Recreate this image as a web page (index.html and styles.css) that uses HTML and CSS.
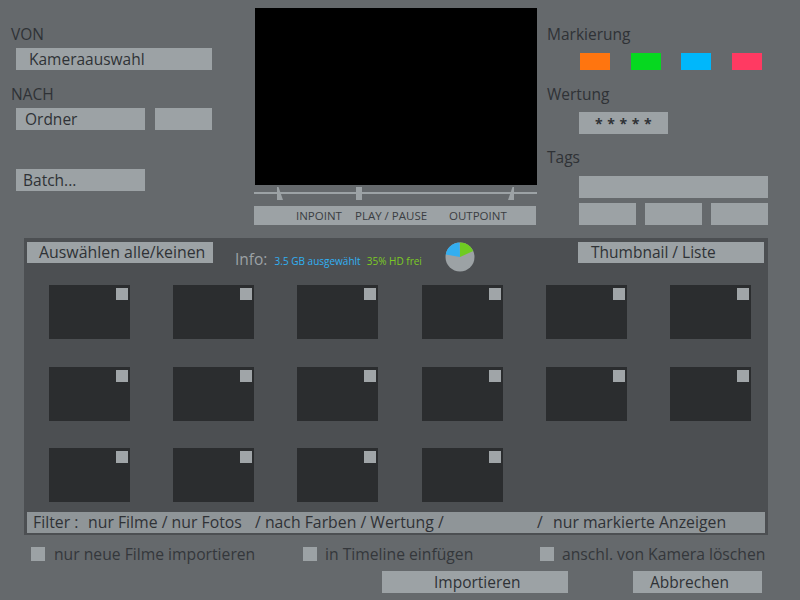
FILE: index.html
```html
<!DOCTYPE html>
<html lang="de">
<head>
<meta charset="utf-8">
<title>Import</title>
<link rel="stylesheet" href="styles.css">
</head>
<body>
<div class="screen">
  <div class="top">
    <div class="col-left">
      <div class="label">VON</div>
      <div class="box box-kamera">Kameraauswahl</div>
      <div class="label label-nach">NACH</div>
      <div class="row-ordner">
        <div class="box box-ordner">Ordner</div>
        <div class="box box-small"></div>
      </div>
      <div class="box box-batch">Batch...</div>
    </div>
    <div class="col-video">
      <div class="video"></div>
      <svg class="slider" width="283" height="20" viewBox="0 0 283 20">
        <rect x="0" y="7" width="283" height="2" fill="#9ca2a5"/>
        <polygon points="23,2 24.5,2 29,15 23,15" fill="#9ca2a5"/>
        <rect x="102" y="2" width="6" height="13" fill="#9ca2a5"/>
        <polygon points="260,2 258.5,2 254,15 260,15" fill="#9ca2a5"/>
      </svg>
      <div class="transport">
        <span class="t-in">INPOINT</span>
        <span class="t-play">PLAY / PAUSE</span>
        <span class="t-out">OUTPOINT</span>
      </div>
    </div>
    <div class="col-right">
      <div class="label">Markierung</div>
      <div class="colors">
        <span class="swatch orange"></span>
        <span class="swatch green"></span>
        <span class="swatch blue"></span>
        <span class="swatch red"></span>
      </div>
      <div class="label label-wertung">Wertung</div>
      <div class="box box-stars">* * * * *</div>
      <div class="label label-tags">Tags</div>
      <div class="box box-tagwide"></div>
      <div class="tag-row">
        <div class="box box-tag"></div>
        <div class="box box-tag"></div>
        <div class="box box-tag"></div>
      </div>
    </div>
  </div>

  <div class="panel">
    <div class="panel-head">
      <div class="box btn-select">Auswählen alle/keinen</div>
      <div class="info">
        <span class="info-label">Info:</span>
        <span class="info-sel">3.5 GB ausgewählt</span>
        <span class="info-free">35% HD frei</span>
      </div>
      <svg class="pie" width="30" height="30" viewBox="0 0 30 30">
        <circle cx="15" cy="15" r="14.5" fill="#9ca2a5"/>
        <path d="M15 15 L15 0.5 A14.5 14.5 0 0 1 28.25 9.1 Z" fill="#6fcb22"/>
        <path d="M15 15 L0.72 12.5 A14.5 14.5 0 0 1 14.6 0.5 Z" fill="#33aef0"/>
      </svg>
      <div class="box btn-view">Thumbnail / Liste</div>
    </div>
    <div class="grid">
      <div class="thumb"><span class="check"></span></div>
      <div class="thumb"><span class="check"></span></div>
      <div class="thumb"><span class="check"></span></div>
      <div class="thumb"><span class="check"></span></div>
      <div class="thumb"><span class="check"></span></div>
      <div class="thumb"><span class="check"></span></div>
      <div class="thumb"><span class="check"></span></div>
      <div class="thumb"><span class="check"></span></div>
      <div class="thumb"><span class="check"></span></div>
      <div class="thumb"><span class="check"></span></div>
      <div class="thumb"><span class="check"></span></div>
      <div class="thumb"><span class="check"></span></div>
      <div class="thumb"><span class="check"></span></div>
      <div class="thumb"><span class="check"></span></div>
      <div class="thumb"><span class="check"></span></div>
      <div class="thumb"><span class="check"></span></div>
    </div>
    <div class="filter">
      <span class="f-label">Filter :</span>
      <span class="f-type">nur Filme / nur Fotos</span>
      <span class="f-color">/ nach Farben / Wertung /</span>
      <span class="f-slash">/</span>
      <span class="f-mark">nur markierte Anzeigen</span>
    </div>
  </div>

  <div class="options">
    <label class="opt opt1"><span class="cb"></span>nur neue Filme importieren</label>
    <label class="opt opt2"><span class="cb"></span>in Timeline einfügen</label>
    <label class="opt opt3"><span class="cb"></span>anschl. von Kamera löschen</label>
  </div>

  <div class="actions">
    <div class="box btn-import">Importieren</div>
    <div class="box btn-cancel">Abbrechen</div>
  </div>
</div>
</body>
</html>
```

FILE: styles.css
```css
* { box-sizing: border-box; }
html, body { margin: 0; padding: 0; }
body {
  background: #65696c;
  font-family: "Open Sans", "Noto Sans", sans-serif;
  color: #2f3236;
}
.screen {
  width: 800px;
  height: 600px;
  background: #65696c;
  overflow: hidden;
}

/* ---------- top area ---------- */
.top {
  display: flex;
  height: 238px;
}
.label {
  height: 20px;
  line-height: 20px;
  font-size: 15.5px;
  color: #2f3236;
}
.box {
  background: #9ca2a5;
  color: #2f3236;
  height: 22px;
  line-height: 22px;
  font-size: 15.5px;
  white-space: nowrap;
}

.col-left {
  width: 254px;
  padding-top: 24px;
  padding-left: 11px;
}
.col-left .box { margin-left: 5px; }
.box-kamera { width: 196px; margin-top: 4px; padding-left: 13px; }
.label-nach { margin-top: 14px; }
.row-ordner { display: flex; margin-top: 4px; }
.box-ordner { width: 129px; padding-left: 9px; }
.col-left .box-small { width: 57px; margin-left: 10px; }
.box-batch { width: 129px; margin-top: 39px; padding-left: 7px; }

.col-video {
  width: 283px;
  padding-top: 8px;
}
.video {
  width: 282px;
  height: 177px;
  margin-left: 1px;
  background: #000;
}
.slider { display: block; }
.transport {
  position: relative;
  margin-top: 1px;
  width: 282px;
  height: 19px;
  background: #9ca2a5;
  font-size: 11.5px;
  line-height: 19px;
  color: #3a3d41;
  white-space: nowrap;
}
.transport span { position: absolute; top: 0; }
.t-in { left: 42px; }
.t-play { left: 101px; }
.t-out { left: 195px; }

.col-right {
  margin-left: 10px;
  width: 253px;
  padding-top: 24px;
}
.colors {
  display: flex;
  justify-content: space-between;
  width: 182px;
  margin-left: 33px;
  margin-top: 9px;
}
.swatch { width: 30px; height: 17px; display: block; }
.orange { background: #ff750f; }
.green { background: #06d820; }
.blue { background: #00b7fb; }
.red { background: #ff3a62; }
.label-wertung { margin-top: 14px; }
.box-stars {
  width: 89px;
  margin-left: 32px;
  margin-top: 8px;
  text-align: center;
  font-weight: bold;
  font-size: 14px;
  letter-spacing: 0.5px;
  padding-top: 1px;
}
.label-tags { margin-top: 13px; }
.box-tagwide { width: 189px; margin-left: 32px; margin-top: 9px; }
.tag-row {
  display: flex;
  gap: 9px;
  margin-left: 32px;
  margin-top: 5px;
}
.box-tag { width: 57px; }

/* ---------- panel ---------- */
.panel {
  margin-left: 24px;
  width: 744px;
  height: 297px;
  background: #4c4f52;
  padding: 4px 3px 2px 3px;
  display: flex;
  flex-direction: column;
}
.panel-head {
  display: flex;
  align-items: flex-start;
  height: 21px;
}
.panel-head .box { height: 21px; line-height: 21px; font-size: 15.5px; }
.panel-head .btn-select { width: 186px; padding-left: 12px; font-size: 15.9px; }
.info {
  width: 188px;
  margin-left: 22px;
  margin-top: 6px;
  white-space: nowrap;
  line-height: 22px;
}
.info-label { font-size: 15.5px; color: #9ca2a5; }
.info-sel { font-size: 10px; color: #30b1f4; margin-left: 3px; }
.info-free { font-size: 10px; color: #7ccb24; margin-left: 2px; }
.pie { display: block; margin-top: 0; margin-left: 22px; }
.btn-view { width: 186px; padding-left: 13px; margin-left: auto; margin-right: 1px; }

.grid {
  display: grid;
  grid-template-columns: repeat(6, 81px);
  grid-auto-rows: 54px;
  column-gap: 43.2px;
  row-gap: 27.5px;
  margin-top: 22px;
  margin-left: 22px;
  height: 217px;
}
.thumb {
  position: relative;
  background: #2b2d2f;
}
.check {
  position: absolute;
  top: 3px;
  right: 2px;
  width: 12px;
  height: 12px;
  background: #a0a5a8;
}

.filter {
  margin-top: 10px;
  height: 21px;
  width: 738px;
  background: #8f9598;
  display: flex;
  align-items: center;
  font-size: 15.8px;
  line-height: 21px;
  white-space: nowrap;
  color: #2f3236;
}
.f-label { margin-left: 6px; width: 55px; }
.f-type { width: 167px; }
.f-color { width: 282px; }
.f-slash { width: 16px; }

/* ---------- options ---------- */
.options {
  display: flex;
  margin-top: 12px;
  height: 14px;
  font-size: 15.7px;
  color: #34373b;
}
.opt {
  display: flex;
  align-items: center;
  height: 14px;
  line-height: 14px;
  white-space: nowrap;
}
.cb {
  display: block;
  width: 14px;
  height: 14px;
  background: #9ca2a5;
}
.opt1 { margin-left: 31px; width: 272px; }
.opt1 .cb { margin-right: 9px; }
.opt2 { width: 237px; }
.opt2 .cb, .opt3 .cb { margin-right: 8px; }

/* ---------- actions ---------- */
.actions {
  display: flex;
  margin-top: 10px;
}
.actions .box { height: 22px; line-height: 22px; }
.btn-import { margin-left: 382px; width: 186px; padding-left: 52px; }
.btn-cancel { margin-left: 65px; width: 129px; padding-left: 17px; }
```
